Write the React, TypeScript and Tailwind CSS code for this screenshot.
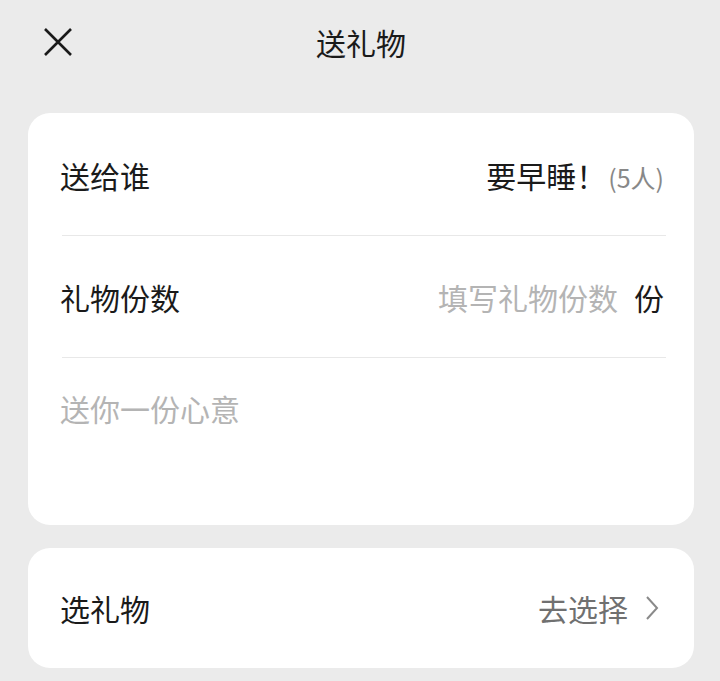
import React from "react";

const font = "font-['Noto_Sans_CJK_SC',sans-serif]";

function CloseIcon() {
  return (
    <svg width="32" height="32" viewBox="0 0 32 32" fill="none" aria-hidden>
      <path d="M3 3L29 29M29 3L3 29" stroke="#1a1a1a" strokeWidth="2.6" strokeLinecap="butt" />
    </svg>
  );
}

function Chevron() {
  return (
    <svg width="16" height="26" viewBox="0 0 16 26" fill="none" aria-hidden>
      <path d="M3 2L13 13L3 24" stroke="#8a8a8a" strokeWidth="2" />
    </svg>
  );
}

export default function App() {
  return (
    <div className={`${font} h-[681px] w-[720px] overflow-hidden bg-[#ebebeb] text-[#1a1a1a]`}>
      <header className="relative flex h-[84px] items-center justify-center">
        <button type="button" className="absolute left-[42px] top-[26px]" aria-label="关闭">
          <CloseIcon />
        </button>
        <h1 className="pl-[2px] text-[30px] leading-none">送礼物</h1>
      </header>

      <div className="ml-[28px] mr-[26px] mt-[29px] rounded-[22px] bg-white">
        <div className="flex h-[122px] items-center justify-between pl-[32px] pr-[30px] pt-[1px]">
          <span className="text-[30px] leading-none">送给谁</span>
          <span className="flex items-baseline">
            <span className="text-[30px] leading-none">要早睡！</span>
            <span className="ml-[2px] text-[25px] leading-none text-[#888]">(5人)</span>
          </span>
        </div>
        <div className="ml-[34px] mr-[28px] h-px bg-[#e8e8e8]" />
        <div className="flex h-[121px] items-center justify-between pl-[32px] pr-[30px]">
          <span className="text-[30px] leading-none">礼物份数</span>
          <span className="flex items-center gap-[16px]">
            <span className="text-[30px] leading-none text-[#b4b4b4]">填写礼物份数</span>
            <span className="text-[30px] leading-none">份</span>
          </span>
        </div>
        <div className="ml-[34px] mr-[28px] h-px bg-[#e8e8e8]" />
        <div className="h-[167px] pl-[32px] pr-[30px] pt-[35px]">
          <span className="text-[30px] leading-none text-[#b4b4b4]">送你一份心意</span>
        </div>
      </div>

      <div className="ml-[28px] mr-[26px] mt-[23px] flex h-[120px] items-center justify-between rounded-[22px] bg-white pl-[32px] pr-[34px]">
        <span className="text-[30px] leading-none">选礼物</span>
        <span className="flex items-center gap-[16px]">
          <span className="text-[30px] leading-none text-[#707070]">去选择</span>
          <Chevron />
        </span>
      </div>
    </div>
  );
}
